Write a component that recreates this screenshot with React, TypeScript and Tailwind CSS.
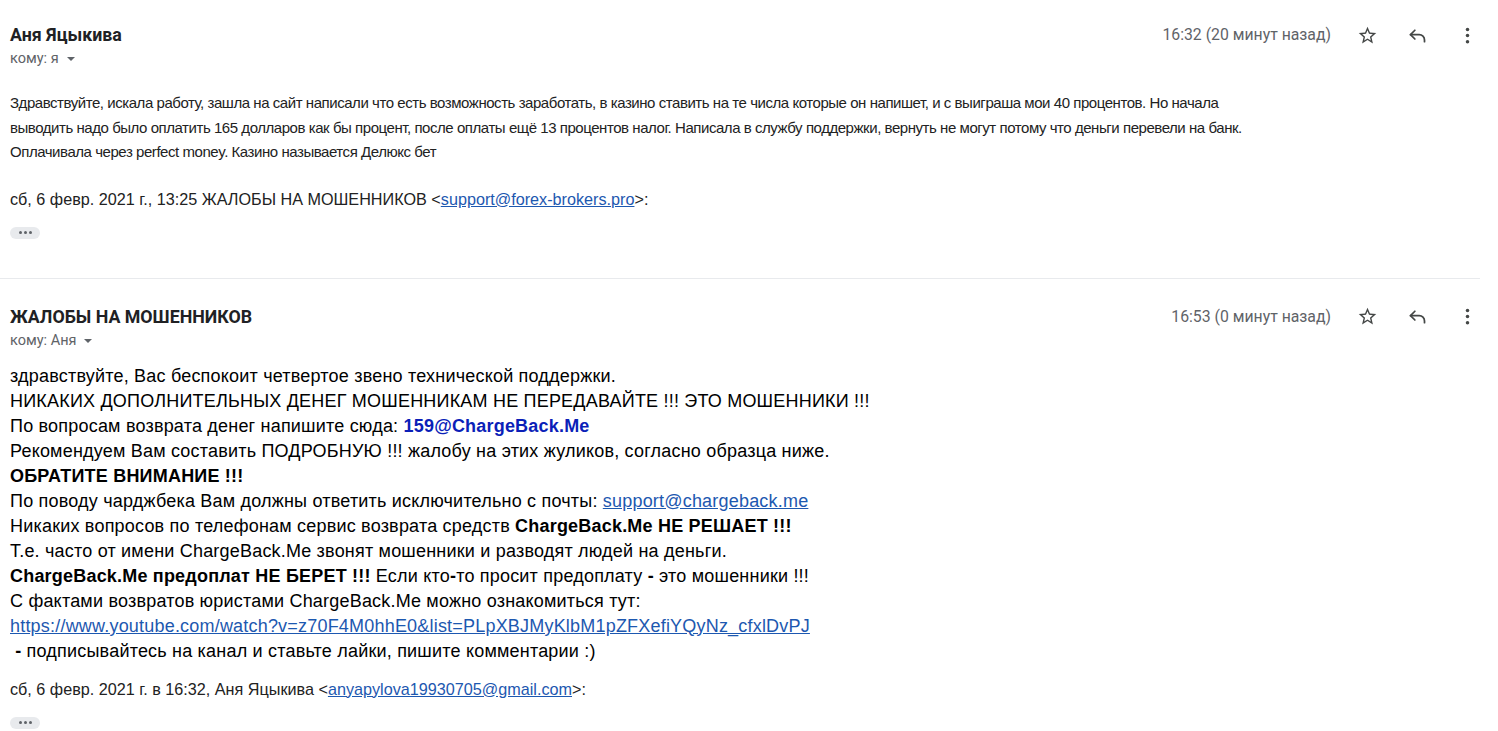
import React from "react";

const StarIcon = () => (
  <svg width="21" height="21" viewBox="0 0 24 24" fill="#444746">
    <path d="M22 9.24l-7.19-.62L12 2 9.19 8.63 2 9.24l5.46 4.73L5.82 21 12 17.27 18.18 21l-1.63-7.03L22 9.24zM12 15.4l-3.76 2.27 1-4.28-3.32-2.88 4.38-.38L12 6.1l1.71 4.04 4.38.38-3.32 2.88 1 4.28L12 15.4z" />
  </svg>
);

const ReplyIcon = () => (
  <svg width="21" height="21" viewBox="0 0 24 24" fill="none" stroke="#444746" strokeWidth="2" strokeLinecap="round" strokeLinejoin="round">
    <path d="M9 6L4 11l5 5" />
    <path d="M4 11h10a6 6 0 0 1 6 6v2" />
  </svg>
);

const MoreIcon = () => (
  <svg width="21" height="21" viewBox="0 0 24 24" fill="#444746">
    <circle cx="12" cy="5" r="2" />
    <circle cx="12" cy="12" r="2" />
    <circle cx="12" cy="19" r="2" />
  </svg>
);

const Caret = () => (
  <svg width="10" height="10" viewBox="0 0 10 10" className="ml-[7px]" fill="#5f6368">
    <path d="M1 3h8L5 7z" />
  </svg>
);

const Header = ({ name, to, time }: { name: string; to: string; time: string }) => (
  <div className="flex justify-between items-start pr-[20px]">
    <div className="flex flex-col">
      <div className="text-[17.8px] leading-[22px] font-bold text-[#202124] font-['Roboto',sans-serif]">{name}</div>
      <div className="mt-[4px] flex items-center text-[14.5px] leading-[18px] text-[#5f6368] font-['Roboto',sans-serif]">
        кому: {to}
        <Caret />
      </div>
    </div>
    <div className="flex items-center h-[22px] font-['Roboto',sans-serif]">
      <span className="text-[15.8px] text-[#5f6368] mr-[26px]">{time}</span>
      <div className="flex items-center gap-[29px]">
        <StarIcon />
        <ReplyIcon />
        <MoreIcon />
      </div>
    </div>
  </div>
);

const Dots = () => (
  <div className="w-[30px] h-[12px] rounded-[6px] bg-[#e8eaed] flex items-center justify-center gap-[2px]">
    <span className="w-[3px] h-[3px] rounded-full bg-[#5f6368]" />
    <span className="w-[3px] h-[3px] rounded-full bg-[#5f6368]" />
    <span className="w-[3px] h-[3px] rounded-full bg-[#5f6368]" />
  </div>
);

const Link = ({ children }: { children: React.ReactNode }) => (
  <a className="text-[#1d58b0] underline">{children}</a>
);

export default function App() {
  return (
    <div className="w-[1498px] h-[731px] bg-white overflow-hidden">
      {/* Message 1 */}
      <div className="pl-[10px] pt-[24px]">
        <Header name="Аня Яцыкива" to="я" time="16:32 (20 минут назад)" />
        <div className="mt-[23px] w-[1240px] text-[15px] leading-[24.5px] tracking-[-0.45px] text-[#222] font-['Liberation_Sans',Arial,sans-serif]">
          Здравствуйте, искала работу, зашла на сайт написали что есть возможность заработать, в казино ставить на те числа которые он напишет, и с выиграша мои 40 процентов. Но начала выводить надо было оплатить 165 долларов как бы процент, после оплаты ещё 13 процентов налог. Написала в службу поддержки, вернуть не могут потому что деньги перевели на банк. Оплачивала через perfect money. Казино называется Делюкс бет
        </div>
        <div className="mt-[24px] text-[16.2px] leading-[20px] text-[#222] font-['Liberation_Sans',Arial,sans-serif]">
          сб, 6 февр. 2021 г., 13:25 ЖАЛОБЫ НА МОШЕННИКОВ &lt;<Link>support@forex-brokers.pro</Link>&gt;:
        </div>
        <div className="mt-[18px]">
          <Dots />
        </div>
      </div>

      <div className="mt-[39px] w-[1480px] h-px bg-[#e8eaed]" />

      {/* Message 2 */}
      <div className="pl-[10px] pt-[27px]">
        <Header name="ЖАЛОБЫ НА МОШЕННИКОВ" to="Аня" time="16:53 (0 минут назад)" />
        <div className="mt-[14px] text-[18px] leading-[25px] text-[#000] font-['Liberation_Sans',Arial,sans-serif] tracking-[0.2px]">
          <div>здравствуйте, Вас беспокоит четвертое звено технической поддержки.</div>
          <div>НИКАКИХ ДОПОЛНИТЕЛЬНЫХ ДЕНЕГ МОШЕННИКАМ НЕ ПЕРЕДАВАЙТЕ !!! ЭТО МОШЕННИКИ !!!</div>
          <div>
            По вопросам возврата денег напишите сюда: <b className="text-[#0b1fb8]">159@ChargeBack.Me</b>
          </div>
          <div>Рекомендуем Вам составить ПОДРОБНУЮ !!! жалобу на этих жуликов, согласно образца ниже.</div>
          <div className="font-bold">ОБРАТИТЕ ВНИМАНИЕ !!!</div>
          <div>
            По поводу чарджбека Вам должны ответить исключительно с почты: <Link>support@chargeback.me</Link>
          </div>
          <div>
            Никаких вопросов по телефонам сервис возврата средств <b>ChargeBack.Me НЕ РЕШАЕТ !!!</b>
          </div>
          <div>Т.е. часто от имени ChargeBack.Me звонят мошенники и разводят людей на деньги.</div>
          <div>
            <b>ChargeBack.Me предоплат НЕ БЕРЕТ !!!</b> Если кто<b>-</b>то просит предоплату <b>-</b> это мошенники !!!
          </div>
          <div>С фактами возвратов юристами ChargeBack.Me можно ознакомиться тут:</div>
          <div>
            <Link>https://www.youtube.com/watch?v=z70F4M0hhE0&amp;list=PLpXBJMyKlbM1pZFXefiYQyNz_cfxlDvPJ</Link>
          </div>
          <div>
            &nbsp;<b>-</b> подписывайтесь на канал и ставьте лайки, пишите комментарии :)
          </div>
        </div>
        <div className="mt-[15px] text-[16.2px] leading-[20px] text-[#222] font-['Liberation_Sans',Arial,sans-serif]">
          сб, 6 февр. 2021 г. в 16:32, Аня Яцыкива &lt;<Link>anyapylova19930705@gmail.com</Link>&gt;:
        </div>
        <div className="mt-[18px]">
          <Dots />
        </div>
      </div>
    </div>
  );
}
